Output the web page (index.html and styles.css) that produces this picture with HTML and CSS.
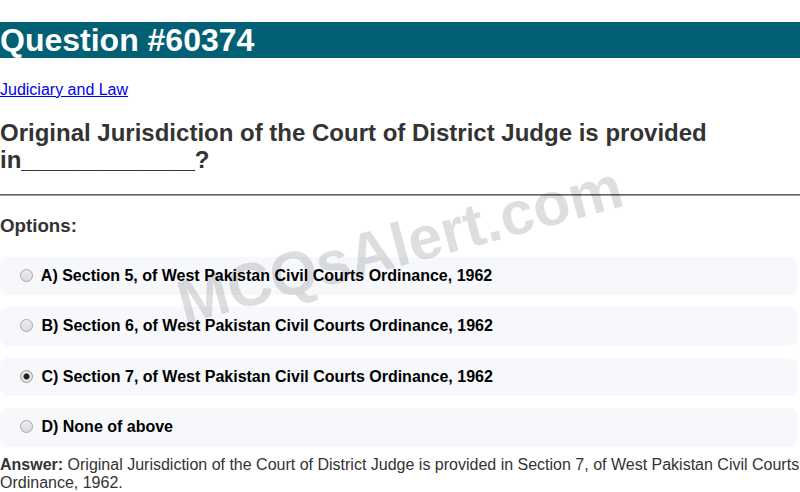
FILE: index.html
```html
<!DOCTYPE html>
<html>
<head>
<meta charset="utf-8">
<link rel="stylesheet" href="styles.css">
</head>
<body>
<div class="page">
  <h1 class="title">Question #60374</h1>
  <p class="cat"><a href="#">Judiciary and Law</a></p>
  <h2 class="question">Original Jurisdiction of the Court of District Judge is provided in_____________?</h2>
  <hr class="sep">
  <h3 class="opts-title">Options:</h3>
  <div class="options">
    <label class="option"><input type="radio" name="q"> A) Section 5, of West Pakistan Civil Courts Ordinance, 1962</label>
    <label class="option"><input type="radio" name="q"> B) Section 6, of West Pakistan Civil Courts Ordinance, 1962</label>
    <label class="option"><input type="radio" name="q" checked> C) Section 7, of West Pakistan Civil Courts Ordinance, 1962</label>
    <label class="option"><input type="radio" name="q"> D) None of above</label>
  </div>
  <p class="answer"><b>Answer:</b> Original Jurisdiction of the Court of District Judge is provided in Section 7, of West Pakistan Civil Courts Ordinance, 1962.</p>
  <div class="watermark">MCQsAlert.com</div>
</div>
</body>
</html>
```
FILE: styles.css
```css
html, body {
  margin: 0;
  padding: 0;
  background: #fff;
}
body {
  font-family: "Liberation Sans", Arial, sans-serif;
  font-size: 16px;
  color: #333;
}
.page {
  position: relative;
  overflow: hidden;
  padding-top: 0.1px;
}
.title {
  font-size: 32px;
  font-weight: bold;
  margin: 21.44px 0;
  background: #026075;
  color: #fff;
  line-height: 36.8px;
}
.cat {
  margin: 22.44px 0 16px;
}
.cat a {
  color: #0000ee;
  text-decoration: underline;
}
.question {
  font-size: 24px;
  font-weight: bold;
  color: #333;
  margin: 19.92px 0;
  line-height: 27.6px;
}
.sep {
  margin: 8px 0;
  border: 0;
  border-top: 1px solid #666;
  border-bottom: 1px solid #999;
  height: 0;
}
.opts-title {
  font-size: 18.72px;
  margin: 19.72px 0 20px;
  color: #333;
  line-height: 21.5px;
}
.options {
  margin-top: 0;
  display: flex;
  flex-direction: column;
  gap: 12px;
  margin-right: 2px;
}
.option {
  display: block;
  background: #f7f8fc;
  border-radius: 8px;
  padding: 10px 15px;
  line-height: 18.4px;
  height: 18.4px;
  font-weight: bold;
  color: #000;
}
.option input {
  -webkit-appearance: none;
  appearance: none;
  box-sizing: border-box;
  width: 13px;
  height: 13px;
  margin: 0 4px 0 5px;
  vertical-align: -1px;
  border: 1px solid #a8a8a8;
  border-radius: 50%;
  background: linear-gradient(#ececec, #dcdcdc);
}
.option input:checked {
  background: radial-gradient(circle, #222 0, #222 2.6px, #e4e4e4 3.4px);
  border-color: #999;
}
.answer {
  margin: 9px 0 0;
  line-height: 18.4px;
  color: #333;
}
.watermark {
  position: absolute;
  left: 400px;
  top: 245px;
  transform: translate(-50%, -50%) rotate(-15deg);
  font-size: 61px;
  font-weight: bold;
  color: rgba(0, 0, 0, 0.13);
  white-space: nowrap;
  pointer-events: none;
  line-height: 1;
}
```
